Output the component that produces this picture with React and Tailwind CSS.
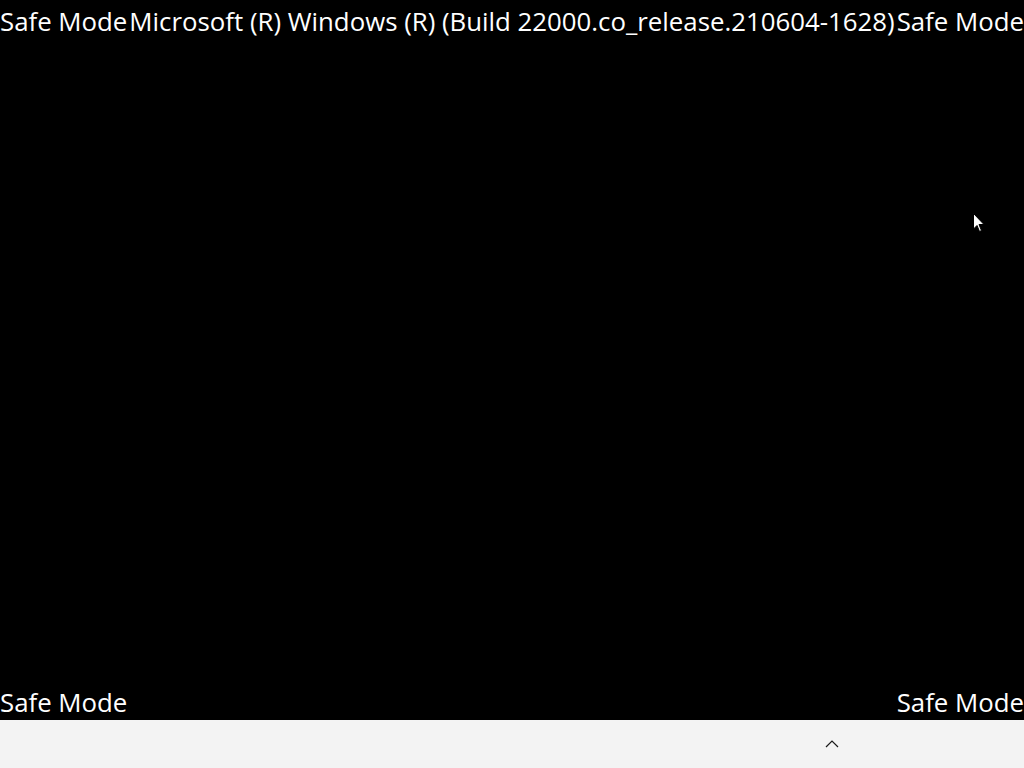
export default function App() {
  return (
    <div className="relative flex h-[768px] w-[1024px] flex-col overflow-hidden bg-black font-['Open_Sans',sans-serif] text-white">
      <div className="flex h-[42px] items-center justify-between whitespace-nowrap text-[25.8px]">
        <span>Safe Mode</span>
        <span>Microsoft (R) Windows (R) (Build 22000.co_release.210604-1628)</span>
        <span>Safe Mode</span>
      </div>
      <div className="flex-1" />
      <div className="flex h-[35px] items-center justify-between text-[25.8px]">
        <span>Safe Mode</span>
        <span>Safe Mode</span>
      </div>
      <div className="flex h-12 items-center bg-[#f3f3f3]">
        <div className="ml-[822px] flex h-5 w-5 items-center justify-center">
          <svg width="14" height="8" viewBox="0 0 14 8" fill="none" stroke="#1a1a1a" strokeWidth="1.2">
            <path d="M1 7 L7 1 L13 7" />
          </svg>
        </div>
      </div>
      <svg className="absolute left-[973px] top-[213px]" width="12" height="20" viewBox="0 0 12 20">
        <path d="M0.5 0.5 L0.5 16 L4 12.5 L6.5 18.5 L8.5 17.5 L6 11.5 L11 11.5 Z" fill="#fff" stroke="#000" strokeWidth="1" />
      </svg>
    </div>
  );
}
